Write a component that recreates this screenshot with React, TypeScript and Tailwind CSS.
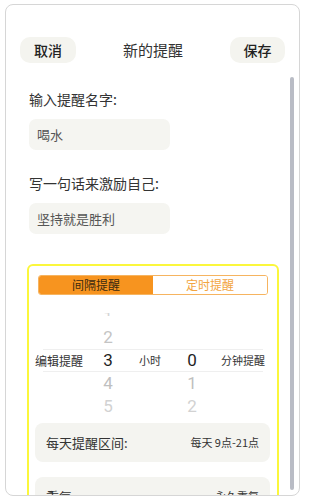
import { useState } from "react";

const HOURS = ["1", "2", "3", "4", "5"];
const MINUTES = ["", "", "0", "1", "2"];

// fade of each wheel row, top to bottom (index 2 is the selected one)
const ROW_TONES = [
  "text-[#d4d4d4] scale-y-[0.2]",
  "text-[#c4c4c4]",
  "text-[#1f1f1f]",
  "text-[#bfbfbf]",
  "text-[#d2d2d2]",
];

function Wheel({ items, width }: { items: string[]; width: string }) {
  return (
    <div className={`flex flex-col ${width}`}>
      {items.map((v, i) => (
        <div key={i} className="flex h-[23px] items-center justify-center">
          <span
            className={`inline-block font-['Roboto',sans-serif] text-[17px] leading-none ${ROW_TONES[i]}`}
          >
            {v}
          </span>
        </div>
      ))}
    </div>
  );
}

function Caption({ text, width, className = "" }: { text: string; width: string; className?: string }) {
  return (
    <div className={`flex h-[115px] items-center ${width} ${className}`}>
      <span className="whitespace-nowrap text-[#333]">{text}</span>
    </div>
  );
}

export default function App() {
  const [mode, setMode] = useState<"interval" | "timed">("interval");
  const [name, setName] = useState("喝水");
  const [motto, setMotto] = useState("坚持就是胜利");

  return (
    <div className="h-[504px] w-[309px] overflow-hidden bg-white pt-[4px] pl-[5px] font-['Noto_Sans_CJK_SC',sans-serif]">
      <div className="flex h-[492px] w-[295px] flex-col overflow-hidden rounded-[8px] border border-[#d6d6d6] bg-white">
        <div className="flex items-center justify-between pt-[32px] pl-[14px] pr-[14px]">
          <button
            type="button"
            className="h-[26px] w-[56px] rounded-[10px] bg-[#f4f4ef] text-[14px] font-medium text-[#222]"
          >
            取消
          </button>
          <p className="text-[15px] text-[#333]">新的提醒</p>
          <button
            type="button"
            className="h-[26px] w-[55px] rounded-[10px] bg-[#f4f4ef] text-[14px] font-medium text-[#222]"
          >
            保存
          </button>
        </div>

        <div className="mt-[14px] flex min-h-0 flex-1">
          <div className="min-w-0 flex-1 overflow-hidden pl-[21px] pr-[11px] pt-[12px]">
            <p className="ml-[2px] h-[20px] text-[14px] leading-[20px] text-[#333]">输入提醒名字:</p>
            <input
              value={name}
              onChange={(e) => setName(e.target.value)}
              className="ml-[2px] mt-[10px] block h-[31px] w-[141px] rounded-[7px] bg-[#f5f5f1] px-[8px] text-[13px] text-[#555] outline-none"
            />

            <p className="ml-[2px] mt-[23px] h-[20px] text-[14px] leading-[20px] text-[#333]">写一句话来激励自己:</p>
            <input
              value={motto}
              onChange={(e) => setMotto(e.target.value)}
              className="ml-[2px] mt-[10px] block h-[31px] w-[141px] rounded-[7px] bg-[#f5f5f1] px-[8px] text-[13px] text-[#555] outline-none"
            />

            <div className="mt-[30px] rounded-[6px] border-2 border-[#fbf73c] pb-[20px]">
              <div className="mx-[9px] mt-[9px] flex h-[20px] overflow-hidden rounded-[3px] border border-[#f6b460] text-[12px]">
                <button
                  type="button"
                  onClick={() => setMode("interval")}
                  className={`flex-1 ${mode === "interval" ? "bg-[#f7941f] text-[#3a2a10]" : "bg-white text-[#f2a541]"}`}
                >
                  间隔提醒
                </button>
                <button
                  type="button"
                  onClick={() => setMode("timed")}
                  className={`flex-1 ${mode === "timed" ? "bg-[#f7941f] text-[#3a2a10]" : "bg-white text-[#f2a541]"}`}
                >
                  定时提醒
                </button>
              </div>

              <div className="relative ml-[6px] mt-[8px] flex w-[230px]">
                <div className="pointer-events-none absolute left-[8px] top-[46px] h-[23px] w-[220px] border-y border-[#efefef]" />
                <Caption text="编辑提醒" width="w-[55px]" className="text-[12px]" />
                <Wheel items={HOURS} width="w-[36px]" />
                <div className="flex h-[115px] w-[48px] items-center justify-center text-[11px] text-[#333]">小时</div>
                <Wheel items={MINUTES} width="w-[36px]" />
                <Caption text="分钟提醒" width="w-[55px]" className="pl-[11px] text-[11px]" />
              </div>

              <div className="ml-[6px] mr-[7px] mt-[5px] flex h-[39px] items-center justify-between rounded-[8px] bg-[#f4f4f0] px-[11px]">
                <span className="text-[13px] text-[#333]">每天提醒区间:</span>
                <span className="text-[11px] text-[#333]">每天 9点-21点</span>
              </div>

              <div className="ml-[6px] mr-[7px] mt-[15px] flex h-[39px] items-center justify-between rounded-[8px] bg-[#f4f4f0] px-[11px]">
                <span className="text-[13px] text-[#333]">重复:</span>
                <span className="text-[11px] text-[#333]">永久重复</span>
              </div>
            </div>
          </div>

          <div className="mb-[5px] mr-[5px] w-[4px] rounded-full bg-[#b9bcc5]" />
        </div>
      </div>
    </div>
  );
}
